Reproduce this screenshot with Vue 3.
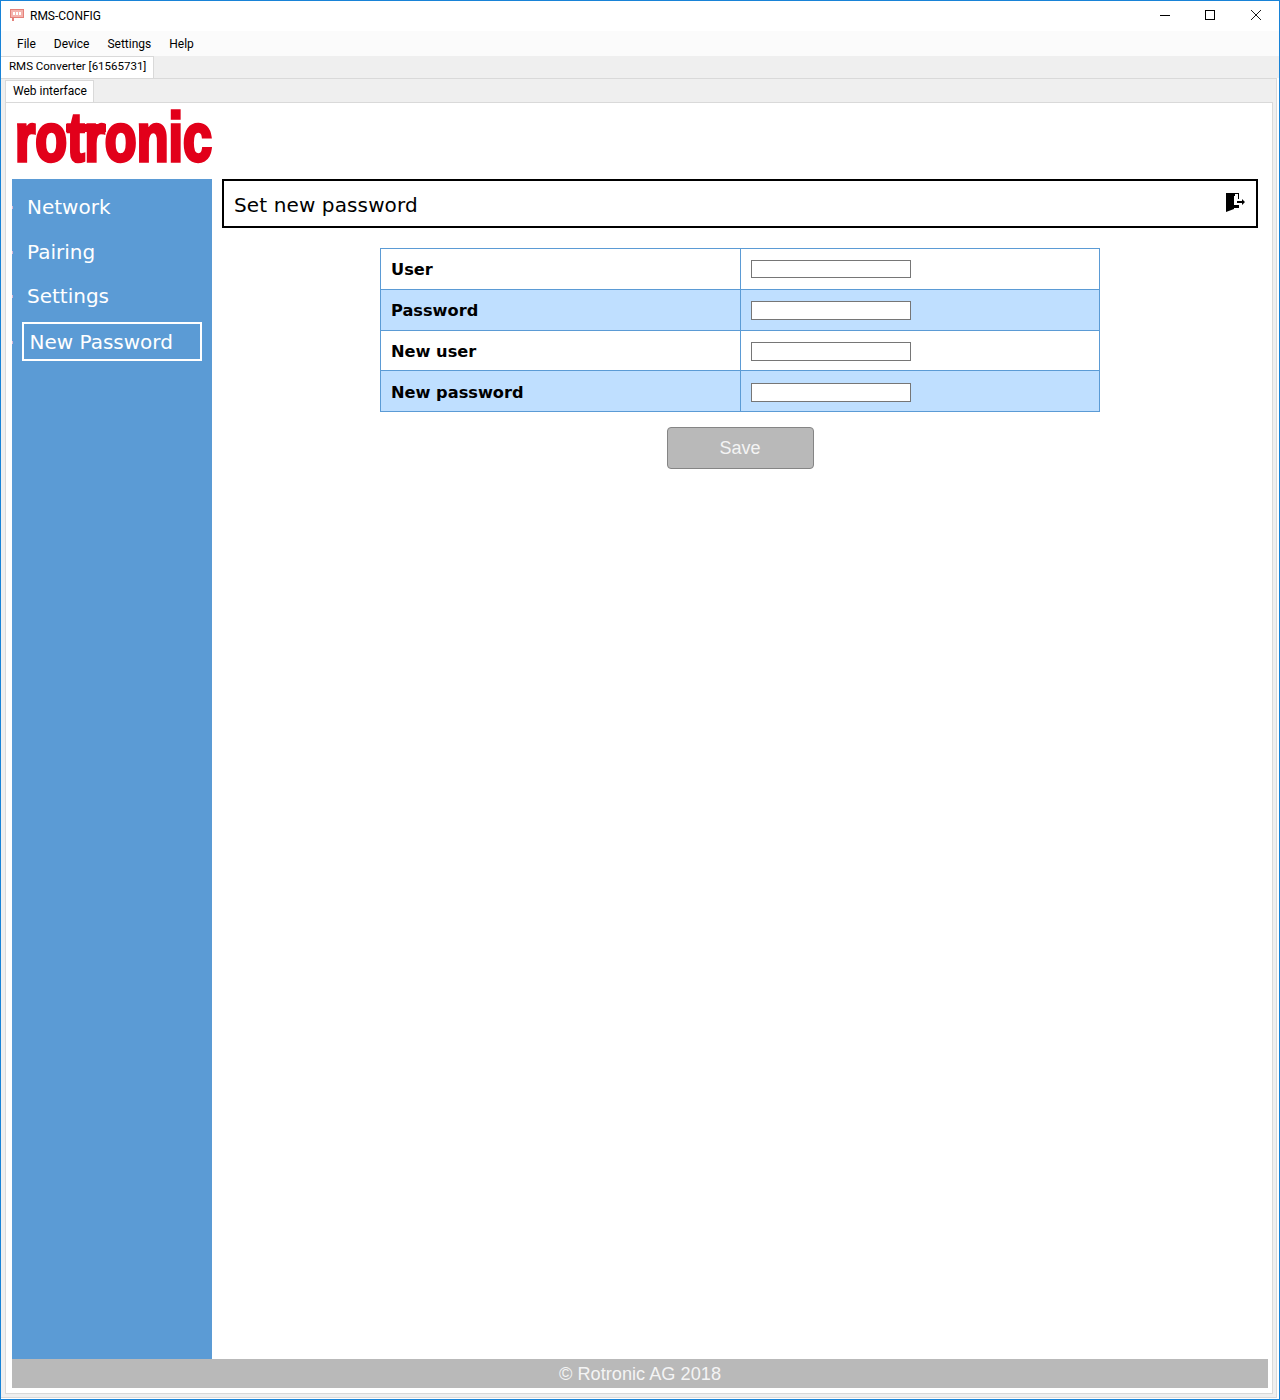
<script setup>
const menus = ['File', 'Device', 'Settings', 'Help']
const navItems = [
  { label: 'Network', active: false },
  { label: 'Pairing', active: false },
  { label: 'Settings', active: false },
  { label: 'New Password', active: true },
]
const fields = ['User', 'Password', 'New user', 'New password']
</script>

<template>
  <div class="window">
    <div class="titlebar">
      <svg class="app-icon" width="14" height="14" viewBox="0 0 14 14">
        <rect x="0.5" y="1.5" width="13" height="8" fill="#f4b3ad" stroke="#e5817a" />
        <rect x="3" y="4" width="2" height="3" fill="#fff" />
        <rect x="6" y="4" width="2" height="3" fill="#fff" />
        <rect x="9" y="4" width="2" height="3" fill="#fff" />
        <rect x="2" y="10" width="2" height="3" fill="#e5817a" />
      </svg>
      <span class="title">RMS-CONFIG</span>
      <div class="win-buttons">
        <svg width="10" height="10" viewBox="0 0 10 10"><path d="M0 5.5h10" stroke="#000" fill="none" /></svg>
        <svg width="10" height="10" viewBox="0 0 10 10"><rect x="0.5" y="0.5" width="9" height="9" stroke="#000" fill="none" /></svg>
        <svg class="win-close" width="10" height="10" viewBox="0 0 10 10"><path d="M0 0l10 10M10 0L0 10" stroke="#000" stroke-width="0.9" fill="none" /></svg>
      </div>
    </div>
    <div class="menubar">
      <span v-for="m in menus" :key="m" class="menu-item">{{ m }}</span>
    </div>
    <div class="device-tabs">
      <div class="device-tab">RMS Converter [61565731]</div>
    </div>
    <div class="device-panel">
      <div class="sub-tabs">
        <div class="sub-tab">Web interface</div>
      </div>
      <div class="sub-panel">
        <div class="logo-row">
          <svg class="logo" width="196" height="58" viewBox="0 0 196 58">
            <text x="-2" y="51" textLength="197" lengthAdjust="spacingAndGlyphs" class="logo-text">rotronic</text>
            <rect x="49" y="14" width="40" height="8" fill="#e2001a" />
          </svg>
        </div>
        <div class="page">
          <nav class="sidebar">
            <div
              v-for="item in navItems"
              :key="item.label"
              class="nav-item"
              :class="{ active: item.active }"
            >{{ item.label }}</div>
          </nav>
          <main class="content">
            <div class="heading">
              <span>Set new password</span>
              <svg class="logout" width="19" height="19" viewBox="0 0 19 19">
                <path d="M0 0h9v3H8v13l-8 3z" fill="#000" />
                <path d="M8 0h5v6h-1V1H8zM8 12h5v3H8z" fill="#000" />
                <path d="M11 8h5V6l3 3-3 3v-2h-5z" fill="#000" />
              </svg>
            </div>
            <div class="form-table">
              <div v-for="f in fields" :key="f" class="form-row">
                <div class="form-label">{{ f }}</div>
                <div class="form-value"><input class="form-input" type="text"></div>
              </div>
            </div>
            <div class="actions">
              <button class="save" disabled>Save</button>
            </div>
          </main>
        </div>
        <footer class="footer">© Rotronic AG 2018</footer>
      </div>
    </div>
  </div>
</template>

<style scoped>
.window {
  width: 1280px;
  height: 1400px;
  box-sizing: border-box;
  border: 1px solid #1883d7;
  background: #fff;
  display: flex;
  flex-direction: column;
  font-family: Roboto, "Noto Sans", sans-serif;
  color: #000;
}
.titlebar {
  height: 30px;
  flex: none;
  box-sizing: border-box;
  padding: 0 0 2px 9px;
  display: flex;
  align-items: center;
}
.app-icon { flex: none; }
.title {
  margin: 2px 0 0 6px;
  font-size: 12px;
}
.win-buttons {
  margin-left: auto;
  display: flex;
  align-items: center;
  gap: 35px;
  padding-right: 18px;
}
.win-close { margin-left: 1px; }
.menubar {
  height: 25px;
  flex: none;
  background: #fbfbfb;
  display: flex;
  align-items: center;
  padding-left: 16px;
  gap: 18px;
  font-size: 12px;
}
.device-tabs {
  height: 22px;
  flex: none;
  background: #efefef;
  display: flex;
  align-items: flex-end;
}
.device-tab {
  height: 22px;
  box-sizing: border-box;
  background: #fff;
  border: 1px solid #d9d9d9;
  border-bottom: none;
  border-left: none;
  padding: 0 7px 0 8px;
  font-size: 11.5px;
  line-height: 18px;
}
.device-panel {
  flex: 1;
  min-height: 0;
  display: flex;
  flex-direction: column;
  box-sizing: border-box;
  margin: 0 2px 1px 0;
  padding: 0 3px 3px 4px;
  background: #efefef;
  border: 1px solid #d9d9d9;
  border-left: none;
}
.sub-tabs {
  height: 23px;
  flex: none;
  display: flex;
  align-items: flex-end;
}
.sub-tab {
  height: 22px;
  box-sizing: border-box;
  background: #fff;
  border: 1px solid #d9d9d9;
  border-bottom: none;
  padding: 1px 6px 0 7px;
  font-size: 12px;
  line-height: 18px;
}
.sub-panel {
  flex: 1;
  min-height: 0;
  display: flex;
  flex-direction: column;
  box-sizing: border-box;
  background: #fff;
  border: 1px solid #d9d9d9;
  padding: 0 4px 5px 6px;
}
.logo-row {
  height: 76px;
  flex: none;
  padding: 7px 0 0 5px;
  box-sizing: border-box;
}
.logo { display: block; overflow: visible; }
.logo-text {
  font-family: "Liberation Sans", sans-serif;
  font-weight: 700;
  font-size: 68px;
  fill: #e2001a;
  stroke: #e2001a;
  stroke-width: 3.5px;
}
.page {
  flex: 1;
  min-height: 0;
  display: flex;
}
.sidebar {
  width: 200px;
  flex: none;
  background: #5b9bd5;
  font-family: "DejaVu Sans", Verdana, sans-serif;
  font-size: 20px;
  color: #fff;
  padding-top: 6px;
  box-sizing: border-box;
}
.nav-item {
  position: relative;
  height: 44.5px;
  line-height: 44px;
  padding-left: 15px;
}
/* clipped list bullets at the sidebar edge */
.nav-item::before {
  content: "";
  position: absolute;
  left: 0;
  top: 21px;
  width: 1px;
  height: 3px;
  background: #d9b8d8;
}
.nav-item.active {
  width: 180px;
  height: 39px;
  line-height: 36px;
  box-sizing: border-box;
  margin: 3.5px 0 0 10px;
  padding-left: 5.5px;
  border: 2px solid #fff;
}
.nav-item.active::before {
  left: -12px;
  top: 17px;
}
.content {
  flex: 1;
  min-width: 0;
  padding-left: 10px;
  font-family: "DejaVu Sans", Verdana, sans-serif;
}
.heading {
  width: 1036px;
  height: 49px;
  box-sizing: border-box;
  border: 2px solid #000;
  display: flex;
  align-items: center;
  justify-content: space-between;
  padding: 2px 11px 0 10px;
  font-size: 20px;
  letter-spacing: 0.12px;
}
.logout { flex: none; margin-top: -4px; }
.form-table {
  width: 720px;
  margin: 20px 0 0 158px;
  border: 1px solid #5b9bd5;
  box-sizing: border-box;
}
.form-row {
  display: flex;
  height: 40.5px;
  box-sizing: border-box;
  border-top: 1px solid #5b9bd5;
}
.form-row:first-child {
  height: 40px;
  border-top: none;
}
.form-row:nth-child(even) { background: #bfdfff; }
.form-label,
.form-value {
  box-sizing: border-box;
  display: flex;
  align-items: center;
  padding-left: 10px;
}
.form-row:nth-child(2) > div { padding-top: 1px; }
.form-row:nth-child(3) > div { padding-top: 3px; }
.form-row:nth-child(4) > div { padding-top: 4px; }
.form-label {
  width: 360px;
  border-right: 1px solid #5b9bd5;
  font-weight: 700;
  font-size: 16.2px;
}
.form-value { flex: 1; }
.form-input {
  width: 160px;
  height: 18.6px;
  box-sizing: border-box;
  border: 1px solid #767676;
  background: #fff;
  padding: 0;
  margin: 0;
}
.actions {
  width: 720px;
  margin: 15px 0 0 158px;
  display: flex;
  justify-content: center;
}
.save {
  width: 147px;
  height: 42px;
  padding: 2px 0 0;
  background: #b9b9b9;
  border: 1px solid #858585;
  border-radius: 4px;
  color: #f4f4f4;
  font-family: "Liberation Sans", Arial, sans-serif;
  font-size: 18px;
}
.footer {
  height: 29px;
  flex: none;
  background: #b9b9b9;
  color: #f4f4f4;
  text-align: center;
  line-height: 31px;
  font-family: "Liberation Sans", Arial, sans-serif;
  font-size: 18.2px;
}
</style>

<style>
body { margin: 0; }
</style>
